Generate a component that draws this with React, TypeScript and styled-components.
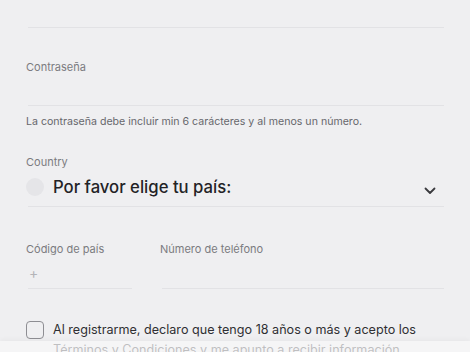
import styled, { createGlobalStyle } from "styled-components";

const GlobalStyle = createGlobalStyle`
    html, body {
        margin: 0;
        padding: 0;
        background: #efeff1;
        font-family: Inter, "Noto Sans", sans-serif;
        overflow: hidden;
    }
`;

const Page = styled.div`
    position: relative;
    width: 470px;
    height: 352px;
    padding: 0 26px;
    box-sizing: border-box;
    overflow: hidden;
`;

const Underline = styled.div<{ $width?: string }>`
    margin-left: 2px;
    width: ${(p) => p.$width ?? "calc(100% - 2px)"};
    border-bottom: 1px solid #e2e2e5;
`;

const TopField = styled.div`
    height: 27px;
`;

const Label = styled.div<{ $top?: number }>`
    margin-top: ${(p) => p.$top ?? 0}px;
    font-size: 11px;
    line-height: 14px;
    color: #7b7b80;
`;

const InputSpace = styled.div<{ $height: number }>`
    height: ${(p) => p.$height}px;
`;

const Hint = styled.div`
    margin-top: 10px;
    font-size: 10.6px;
    line-height: 12px;
    color: #67676c;
`;

const SelectRow = styled.div`
    margin-top: 6px;
    height: 24px;
    display: flex;
    align-items: center;
    padding-bottom: 7px;
`;

const Flag = styled.div`
    width: 18px;
    height: 18px;
    border-radius: 50%;
    background: #e5e5e8;
    flex-shrink: 0;
`;

const SelectText = styled.div`
    margin-left: 9px;
    flex: 1;
    font-size: 16.7px;
    font-weight: 500;
    color: #232326;
`;

const Chevron = styled.svg`
    margin-right: 8px;
    margin-top: 7px;
`;

const PhoneRow = styled.div`
    margin-top: 35px;
    display: flex;
    gap: 28px;
`;

const PhoneCol = styled.div<{ $width?: string }>`
    width: ${(p) => p.$width ?? "auto"};
    flex: ${(p) => (p.$width ? "none" : "1")};
    display: flex;
    flex-direction: column;
`;

const PlusValue = styled.div`
    margin-top: 9px;
    height: 16px;
    padding: 0 0 7px 3px;
    font-size: 14px;
    line-height: 16px;
    color: #b4b4b8;
`;

const Spacer = styled.div`
    margin-top: 9px;
    height: 23px;
`;

const ConsentRow = styled.div`
    margin-top: 31px;
    display: flex;
    gap: 9px;
`;

const Checkbox = styled.div`
    width: 18px;
    height: 18px;
    margin-top: 1px;
    box-sizing: border-box;
    border: 1.5px solid #8e8e93;
    border-radius: 4px;
    flex-shrink: 0;
`;

const ConsentText = styled.div`
    font-size: 12.6px;
    line-height: 20px;
    color: #2f2f33;
`;

const BottomFade = styled.div`
    position: absolute;
    left: 0;
    right: 0;
    bottom: 0;
    height: 11px;
    background: rgba(247, 247, 248, 0.72);
    box-shadow: 0 -2px 4px rgba(0, 0, 0, 0.03);
`;

export default function App() {
    return (
        <Page>
            <GlobalStyle />
            <TopField />
            <Underline />

            <Label $top={32}>Contraseña</Label>
            <InputSpace $height={31} />
            <Underline />
            <Hint>La contraseña debe incluir min 6 carácteres y al menos un número.</Hint>

            <Label $top={27}>Country</Label>
            <SelectRow>
                <Flag />
                <SelectText>Por favor elige tu país:</SelectText>
                <Chevron width="12" height="8" viewBox="0 0 12 8" fill="none">
                    <path d="M1.5 1.5L6 6L10.5 1.5" stroke="#3a3a3e" strokeWidth="1.8" strokeLinecap="round" strokeLinejoin="round" />
                </Chevron>
            </SelectRow>
            <Underline />

            <PhoneRow>
                <PhoneCol $width="106px">
                    <Label>Código de país</Label>
                    <PlusValue>+</PlusValue>
                    <Underline />
                </PhoneCol>
                <PhoneCol>
                    <Label>Número de teléfono</Label>
                    <Spacer />
                    <Underline />
                </PhoneCol>
            </PhoneRow>

            <ConsentRow>
                <Checkbox />
                <ConsentText>
                    Al registrarme, declaro que tengo 18 años o más y acepto los Términos y Condiciones y me apunto a recibir información
                </ConsentText>
            </ConsentRow>
            <BottomFade />
        </Page>
    );
}
